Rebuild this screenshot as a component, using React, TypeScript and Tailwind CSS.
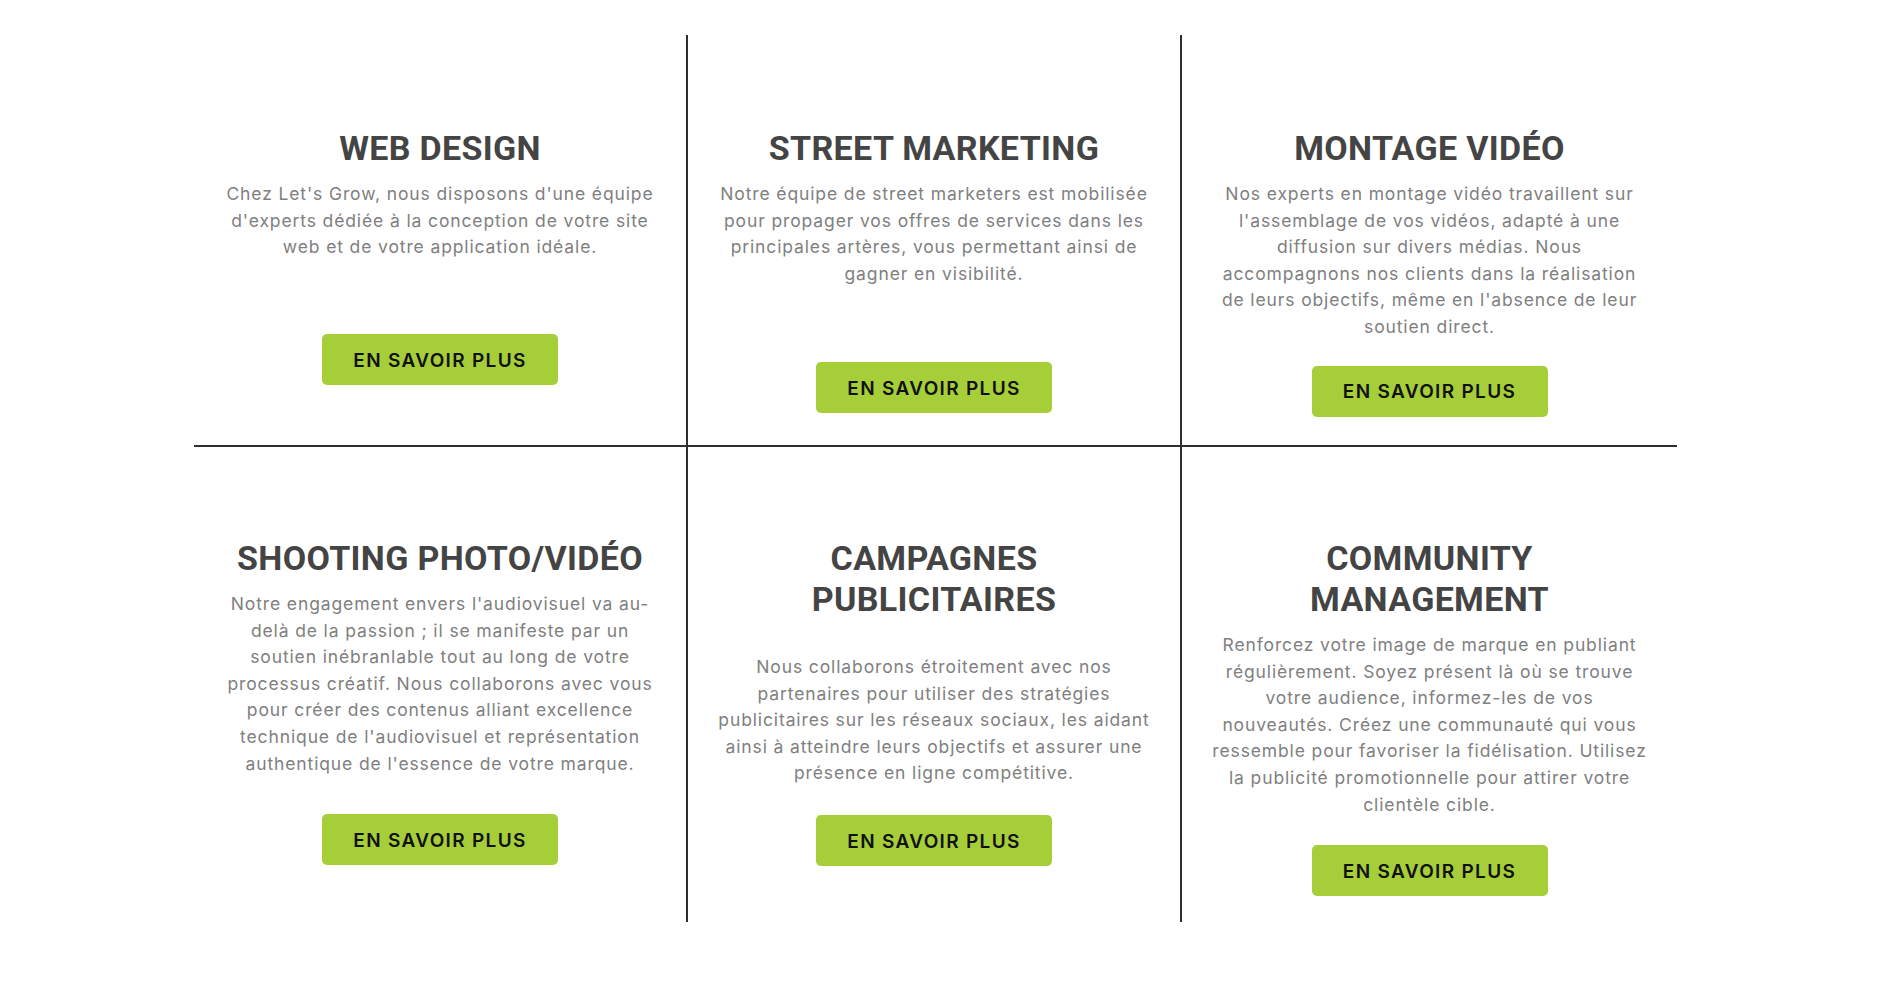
import React from 'react';

type Service = {
    title: string[];
    lines: string[];
    textGap: string;
    buttonGap: string;
};

const topRow: Service[] = [
    {
        title: ['WEB DESIGN'],
        lines: [
            "Chez Let's Grow, nous disposons d'une équipe",
            "d'experts dédiée à la conception de votre site",
            'web et de votre application idéale.',
        ],
        textGap: 'mt-[12px]',
        buttonGap: 'mt-[73px]',
    },
    {
        title: ['STREET MARKETING'],
        lines: [
            'Notre équipe de street marketers est mobilisée',
            'pour propager vos offres de services dans les',
            'principales artères, vous permettant ainsi de',
            'gagner en visibilité.',
        ],
        textGap: 'mt-[12px]',
        buttonGap: 'mt-[75px]',
    },
    {
        title: ['MONTAGE VIDÉO'],
        lines: [
            'Nos experts en montage vidéo travaillent sur',
            "l'assemblage de vos vidéos, adapté à une",
            'diffusion sur divers médias. Nous',
            'accompagnons nos clients dans la réalisation',
            "de leurs objectifs, même en l'absence de leur",
            'soutien direct.',
        ],
        textGap: 'mt-[12px]',
        buttonGap: 'mt-[25px]',
    },
];

const bottomRow: Service[] = [
    {
        title: ['SHOOTING PHOTO/VIDÉO'],
        lines: [
            "Notre engagement envers l'audiovisuel va au-",
            'delà de la passion ; il se manifeste par un',
            'soutien inébranlable tout au long de votre',
            'processus créatif. Nous collaborons avec vous',
            'pour créer des contenus alliant excellence',
            "technique de l'audiovisuel et représentation",
            "authentique de l'essence de votre marque.",
        ],
        textGap: 'mt-[12px]',
        buttonGap: 'mt-[37px]',
    },
    {
        title: ['CAMPAGNES', 'PUBLICITAIRES'],
        lines: [
            'Nous collaborons étroitement avec nos',
            'partenaires pour utiliser des stratégies',
            'publicitaires sur les réseaux sociaux, les aidant',
            'ainsi à atteindre leurs objectifs et assurer une',
            'présence en ligne compétitive.',
        ],
        textGap: 'mt-[34px]',
        buttonGap: 'mt-[28px]',
    },
    {
        title: ['COMMUNITY', 'MANAGEMENT'],
        lines: [
            'Renforcez votre image de marque en publiant',
            'régulièrement. Soyez présent là où se trouve',
            'votre audience, informez-les de vos',
            'nouveautés. Créez une communauté qui vous',
            'ressemble pour favoriser la fidélisation. Utilisez',
            'la publicité promotionnelle pour attirer votre',
            'clientèle cible.',
        ],
        textGap: 'mt-[12px]',
        buttonGap: 'mt-[27px]',
    },
];

const ServiceCard = (props: { service: Service; className: string }) => {
    const { service, className } = props;
    return (
        <div className={`flex flex-col items-center text-center ${className}`}>
            <h2 className="font-['Roboto',sans-serif] text-[34px] leading-[41px] font-bold tracking-[0.01em] text-[#444444]">
                {service.title.map((t) => (
                    <span key={t} className="block">
                        {t}
                    </span>
                ))}
            </h2>
            <p
                className={`${service.textGap} font-['Inter',sans-serif] text-[17.5px] leading-[26.6px] tracking-[0.05em] text-[#808080]`}
            >
                {service.lines.map((l) => (
                    <span key={l} className="block whitespace-nowrap">
                        {l}
                    </span>
                ))}
            </p>
            <a
                href="#"
                className={`${service.buttonGap} flex h-[51px] w-[236px] items-center justify-center rounded-[5px] bg-[#a6ce39] pt-[3px] font-['Inter',sans-serif] text-[19px] font-semibold tracking-[0.07em] text-[#111111]`}
            >
                EN SAVOIR PLUS
            </a>
        </div>
    );
};

export default function App() {
    return (
        <div className="min-h-[986px] w-full bg-white pt-[35px] pl-[194px]">
            <div className="grid w-[1483px] grid-cols-[494px_494px_495px]">
                {topRow.map((s, i) => (
                    <ServiceCard
                        key={s.title.join(' ')}
                        service={s}
                        className={`h-[412px] border-b-2 border-[#2e2e2e] pt-[93px] ${
                            i < 2 ? 'border-r-2' : ''
                        }`}
                    />
                ))}
                {bottomRow.map((s, i) => (
                    <ServiceCard
                        key={s.title.join(' ')}
                        service={s}
                        className={`h-[475px] border-[#2e2e2e] pt-[91px] ${
                            i < 2 ? 'border-r-2' : ''
                        }`}
                    />
                ))}
            </div>
        </div>
    );
}
